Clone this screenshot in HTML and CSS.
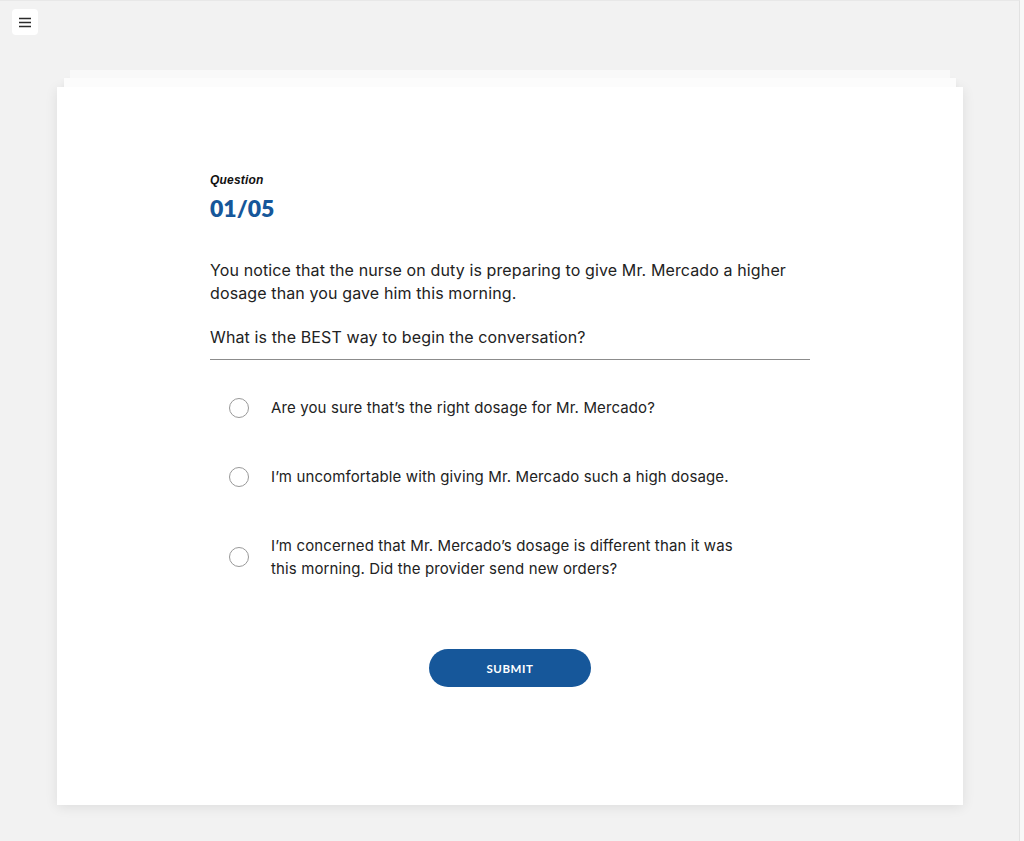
FILE: index.html
```html
<!DOCTYPE html>
<html lang="en">
<head>
<meta charset="UTF-8" />
<meta name="viewport" content="width=device-width, initial-scale=1.0" />
<title>Question 01/05</title>
<link rel="stylesheet" href="styles.css">
</head>
<body>
<div class="app">
    <button type="button" class="menu-btn" aria-label="Menu">
        <svg width="12" height="11" viewBox="0 0 12 11">
            <path d="M0 1.5h12M0 5.5h12M0 9.5h12" stroke="#2b2b2b" stroke-width="1.5" />
        </svg>
    </button>

    <div class="card">
        <div class="quiz">
            <p class="label">Question</p>
            <h2 class="counter">01/05</h2>

            <div class="prompt">
                <p>You notice that the nurse on duty is preparing to give Mr. Mercado a higher dosage than you gave him this morning.</p>
                <p>What is the BEST way to begin the conversation?</p>
            </div>

            <form class="options">
                <label class="option">
                    <input type="radio" name="answer" value="a" />
                    <span>Are you sure that’s the right dosage for Mr. Mercado?</span>
                </label>
                <label class="option">
                    <input type="radio" name="answer" value="b" />
                    <span>I’m uncomfortable with giving Mr. Mercado such a high dosage.</span>
                </label>
                <label class="option">
                    <input type="radio" name="answer" value="c" />
                    <span>I’m concerned that Mr. Mercado’s dosage is different than it was this morning. Did the provider send new orders?</span>
                </label>
            </form>

            <div class="actions">
                <button type="button" class="submit">Submit</button>
            </div>
        </div>
    </div>
</div>
</body>
</html>
```

FILE: styles.css
```css
html {
    background-color: #f8f8f8;
}

body {
    margin: 0;
    font-family: "Inter", "Liberation Sans", sans-serif;
    color: #222;
}

.app {
    width: 1020px;
    min-height: 841px;
    box-sizing: border-box;
    background-color: #f2f2f2;
    border-right: 1px solid #e2e2e2;
    border-top: 1px solid #e8e8e8;
    padding: 86px 0 0 57px;
    position: relative;
}

.menu-btn {
    position: absolute;
    top: 8px;
    left: 12px;
    width: 26px;
    height: 26px;
    border: none;
    border-radius: 4px;
    background-color: #fff;
    padding: 0;
    display: flex;
    align-items: center;
    justify-content: center;
    cursor: pointer;
}

.card {
    width: 906px;
    box-sizing: border-box;
    background-color: #fff;
    padding: 85px 0 118px;
    box-shadow:
        0 -16px 0 -7px #fcfcfc,
        0 -30px 0 -13px #f9f9f9,
        0 -15px 6px -8px rgba(0, 0, 0, 0.05),
        0 2px 12px rgba(0, 0, 0, 0.09);
}

.quiz {
    width: 600px;
    margin: 0 auto;
}

.label {
    margin: 0;
    font-family: "Liberation Sans", Arial, sans-serif;
    font-size: 12px;
    font-weight: bold;
    font-style: italic;
    line-height: 16px;
    letter-spacing: 0.2px;
    color: #111;
}

.counter {
    margin: 7px 0 0;
    font-family: "Lato", "Open Sans", sans-serif;
    font-size: 23px;
    font-weight: 800;
    line-height: 26px;
    color: #16579a;
}

.prompt {
    margin-top: 38px;
    padding-bottom: 10px;
    border-bottom: 1px solid #8c8c8c;
}

.prompt p {
    margin: 0 0 21px;
    font-size: 16px;
    line-height: 23px;
    letter-spacing: 0.12px;
}

.prompt p:last-child {
    margin-bottom: 0;
}

.options {
    margin-top: 13px;
}

.option {
    display: flex;
    align-items: center;
    padding: 23px 0 23px 19px;
    font-size: 15px;
    line-height: 23px;
    letter-spacing: 0.12px;
    cursor: pointer;
}

.option input {
    appearance: none;
    width: 20px;
    height: 20px;
    margin: 0 22px 0 0;
    flex-shrink: 0;
    border: 1.3px solid #999;
    border-radius: 50%;
    background-color: #fff;
}

.option span {
    max-width: 480px;
}

.actions {
    margin-top: 46px;
    display: flex;
    justify-content: center;
}

.submit {
    width: 162px;
    height: 38px;
    border: none;
    border-radius: 19px;
    background-color: #16579a;
    color: #fff;
    font-family: "Lato", sans-serif;
    font-size: 11.5px;
    font-weight: 700;
    letter-spacing: 0.6px;
    text-transform: uppercase;
    cursor: pointer;
}
```
